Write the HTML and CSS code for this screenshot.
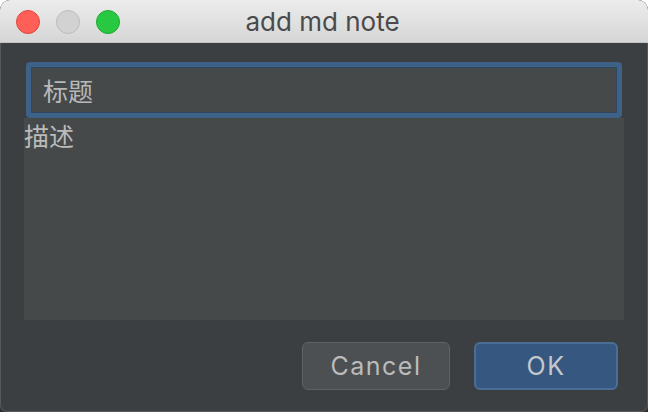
FILE: index.html
```html
<!DOCTYPE html>
<html>
<head>
<meta charset="utf-8">
<link rel="stylesheet" href="styles.css">
</head>
<body>
<div class="window">
  <div class="titlebar">
    <div class="lights">
      <span class="light red"></span>
      <span class="light gray"></span>
      <span class="light green"></span>
    </div>
    <div class="title">add md note</div>
    <div></div>
  </div>
  <div class="content">
    <div class="field">标题</div>
    <div class="area">描述</div>
    <div class="buttons">
      <div class="btn cancel">Cancel</div>
      <div class="btn ok">OK</div>
    </div>
  </div>
</div>
</body>
</html>
```
FILE: styles.css
```css
html, body {
  margin: 0;
  padding: 0;
}
body {
  width: 648px;
  height: 412px;
  background: linear-gradient(#ffffff 50%, #2e2f30 50%);
}
.window {
  width: 648px;
  height: 412px;
  box-sizing: border-box;
  border-radius: 10px 10px 7px 7px;
  overflow: hidden;
  background: #3c3f41;
  box-shadow: inset 0 0 0 1px #55585a;
  display: flex;
  flex-direction: column;
}
.titlebar {
  height: 43px;
  box-sizing: border-box;
  flex: none;
  background: linear-gradient(#ececec, #d6d6d6);
  border-bottom: 1px solid #c4c4c4;
  display: grid;
  grid-template-columns: 1fr auto 1fr;
  align-items: center;
}
.lights {
  display: flex;
  gap: 16px;
  padding-left: 16px;
  padding-top: 1px;
}
.light {
  width: 24px;
  height: 24px;
  box-sizing: border-box;
  border-radius: 50%;
  display: block;
}
.red { background: #fe5f57; border: 1px solid #e2463f; }
.gray { background: #d2d2d2; border: 1px solid #bcbcbc; }
.green { background: #28c840; border: 1px solid #1eaa31; }
.title {
  font-family: Inter, "Liberation Sans", sans-serif;
  font-size: 26px;
  color: #4a4a4a;
  padding-top: 1px;
  padding-right: 3px;
}
.content {
  flex: 1;
  display: flex;
  flex-direction: column;
  padding: 19px 24px 0 24px;
}
.field {
  margin: 0 2px;
  height: 56px;
  box-sizing: border-box;
  border: 5px solid #3e6287;
  border-radius: 4px;
  background: #45494a;
  box-shadow: inset 0 0 0 1px #2f4861;
  padding-left: 12px;
  display: flex;
  align-items: center;
  font-family: "Noto Sans CJK SC", sans-serif;
  font-size: 25px;
  color: #b8b8b8;
}
.area {
  height: 202px;
  background: #45494a;
  font-family: "Noto Sans CJK SC", sans-serif;
  font-size: 25px;
  line-height: 34px;
  color: #bbbbbb;
}
.buttons {
  display: flex;
  justify-content: flex-end;
  gap: 24px;
  padding-top: 22px;
  padding-right: 6px;
}
.btn {
  height: 48px;
  box-sizing: border-box;
  border-radius: 6px;
  display: flex;
  align-items: center;
  justify-content: center;
  font-family: Inter, "Liberation Sans", sans-serif;
  font-size: 25px;
  letter-spacing: 1.5px;
  color: #bbbbbb;
}
.cancel {
  width: 148px;
  background: #4c5052;
  border: 1px solid #5e6264;
}
.ok {
  width: 144px;
  background: #365880;
  border: 2px solid #4a6e96;
  color: #c4c8cd;
}
```
